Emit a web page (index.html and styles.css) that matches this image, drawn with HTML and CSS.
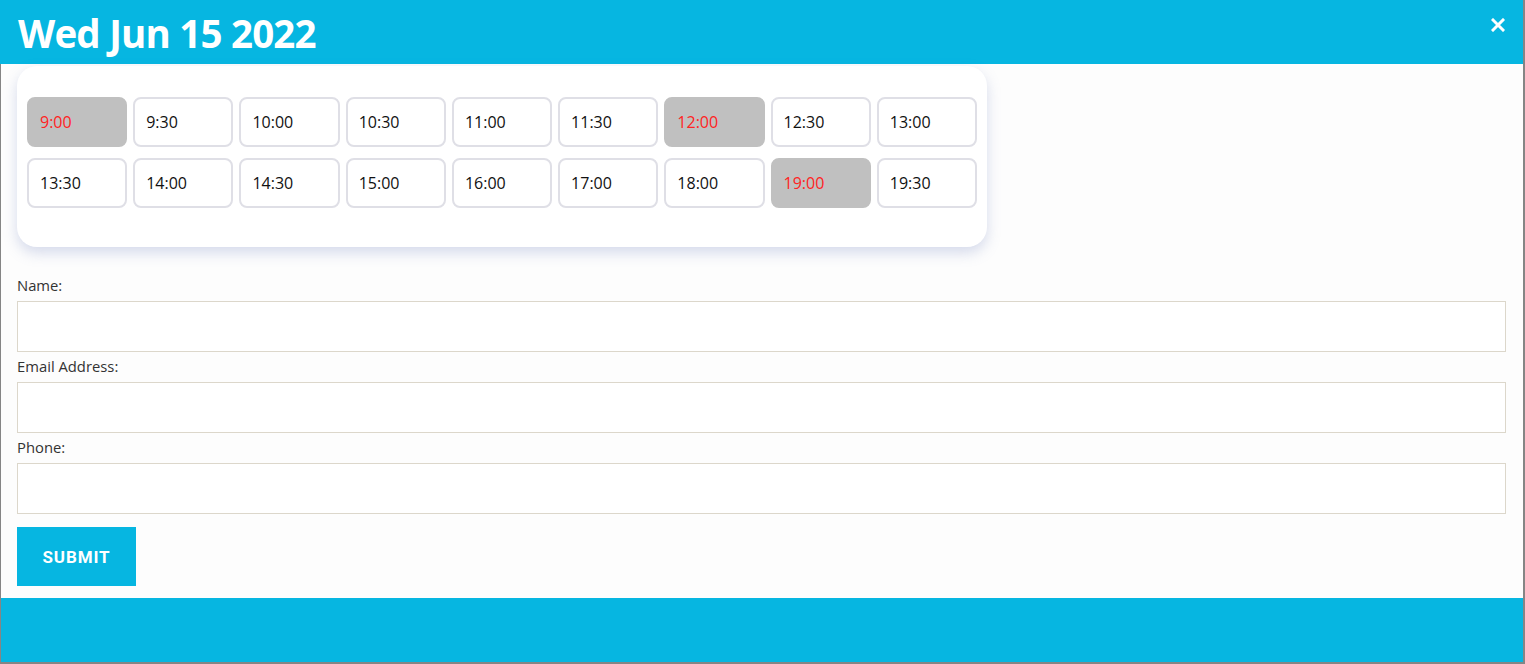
FILE: index.html
```html
<!DOCTYPE html>
<html lang="en">
<head>
<meta charset="utf-8">
<title>Booking</title>
<link rel="stylesheet" href="styles.css">
</head>
<body>
<div class="frame">
  <header class="head">
    <h1 class="title">Wed Jun 15 2022</h1>
    <button class="close" aria-label="Close">
      <svg width="14" height="14" viewBox="0 0 14 14"><path d="M2 2 L12 12 M12 2 L2 12" stroke="#fff" stroke-width="3" stroke-linecap="square"/></svg>
    </button>
  </header>
  <main class="body">
    <div class="card">
      <div class="slots">
        <div class="slot booked">9:00</div>
        <div class="slot">9:30</div>
        <div class="slot">10:00</div>
        <div class="slot">10:30</div>
        <div class="slot">11:00</div>
        <div class="slot">11:30</div>
        <div class="slot booked">12:00</div>
        <div class="slot">12:30</div>
        <div class="slot">13:00</div>
        <div class="slot">13:30</div>
        <div class="slot">14:00</div>
        <div class="slot">14:30</div>
        <div class="slot">15:00</div>
        <div class="slot">16:00</div>
        <div class="slot">17:00</div>
        <div class="slot">18:00</div>
        <div class="slot booked">19:00</div>
        <div class="slot">19:30</div>
      </div>
    </div>
    <form class="form">
      <label class="label" for="name">Name:</label>
      <input class="input" id="name" type="text">
      <label class="label" for="email">Email Address:</label>
      <input class="input" id="email" type="text">
      <label class="label" for="phone">Phone:</label>
      <input class="input" id="phone" type="text">
      <button class="submit" type="button">SUBMIT</button>
    </form>
  </main>
  <footer class="foot"></footer>
</div>
</body>
</html>
```
FILE: styles.css
```css
* { box-sizing: border-box; }
html, body { margin: 0; padding: 0; }
body {
  background: #858585;
  font-family: "Open Sans", "Noto Sans", sans-serif;
  width: 1525px;
  height: 664px;
  overflow: hidden;
}
.frame {
  width: 1522px;
  height: 662px;
  margin-left: 1px;
  background: #fdfdfd;
  display: flex;
  flex-direction: column;
}
.head {
  height: 64px;
  margin-left: -1px;
  background: #06b6e1;
  display: flex;
  align-items: flex-start;
  justify-content: space-between;
  padding: 0 18px 0 18px;
  flex: none;
}
.title {
  margin: 0;
  color: #fff;
  font-family: "Open Sans", sans-serif;
  font-weight: 700;
  font-size: 38.5px;
  line-height: 66px;
  letter-spacing: -0.8px;
}
.close {
  background: none;
  border: 0;
  padding: 0;
  margin-top: 18px;
  width: 14px;
  height: 14px;
  display: block;
}
.close svg { display: block; }
.body {
  flex: 1;
  padding: 0 17px 0 16px;
}
.card {
  width: 970px;
  margin-top: 2px;
  background: #fff;
  border-radius: 20px;
  padding: 31px 10px 39px;
  box-shadow: 0 6px 14px rgba(110, 130, 190, 0.28);
}
.slots {
  display: grid;
  grid-template-columns: repeat(9, 1fr);
  column-gap: 6px;
  row-gap: 11px;
}
.slot {
  height: 50px;
  border: 2px solid #dfdfe6;
  border-radius: 8px;
  padding-left: 11px;
  display: flex;
  align-items: center;
  font-size: 16px;
  color: #111;
  background: #fff;
}
.slot.booked {
  background: #c0c0c0;
  border-color: #c0c0c0;
  color: #ff2323;
}
.form {
  margin-top: 24px;
  display: flex;
  flex-direction: column;
  align-items: flex-start;
}
.label {
  display: block;
  font-size: 14.8px;
  line-height: 20px;
  color: #333;
  padding-top: 4px;
  margin-bottom: 6px;
}
.input {
  display: block;
  width: 100%;
  height: 51px;
  border: 1px solid #dcd7cb;
  background: #fff;
  margin: 0;
}
.submit {
  margin-top: 13px;
  width: 119px;
  height: 59px;
  border: 0;
  background: #06b6e1;
  color: #fff;
  font-family: Roboto, "Liberation Sans", sans-serif;
  font-weight: 700;
  font-size: 17px;
  letter-spacing: 0.9px;
  padding: 0;
}
.foot {
  flex: none;
  height: 64px;
  background: #06b6e1;
  margin-bottom: 0;
}
```
